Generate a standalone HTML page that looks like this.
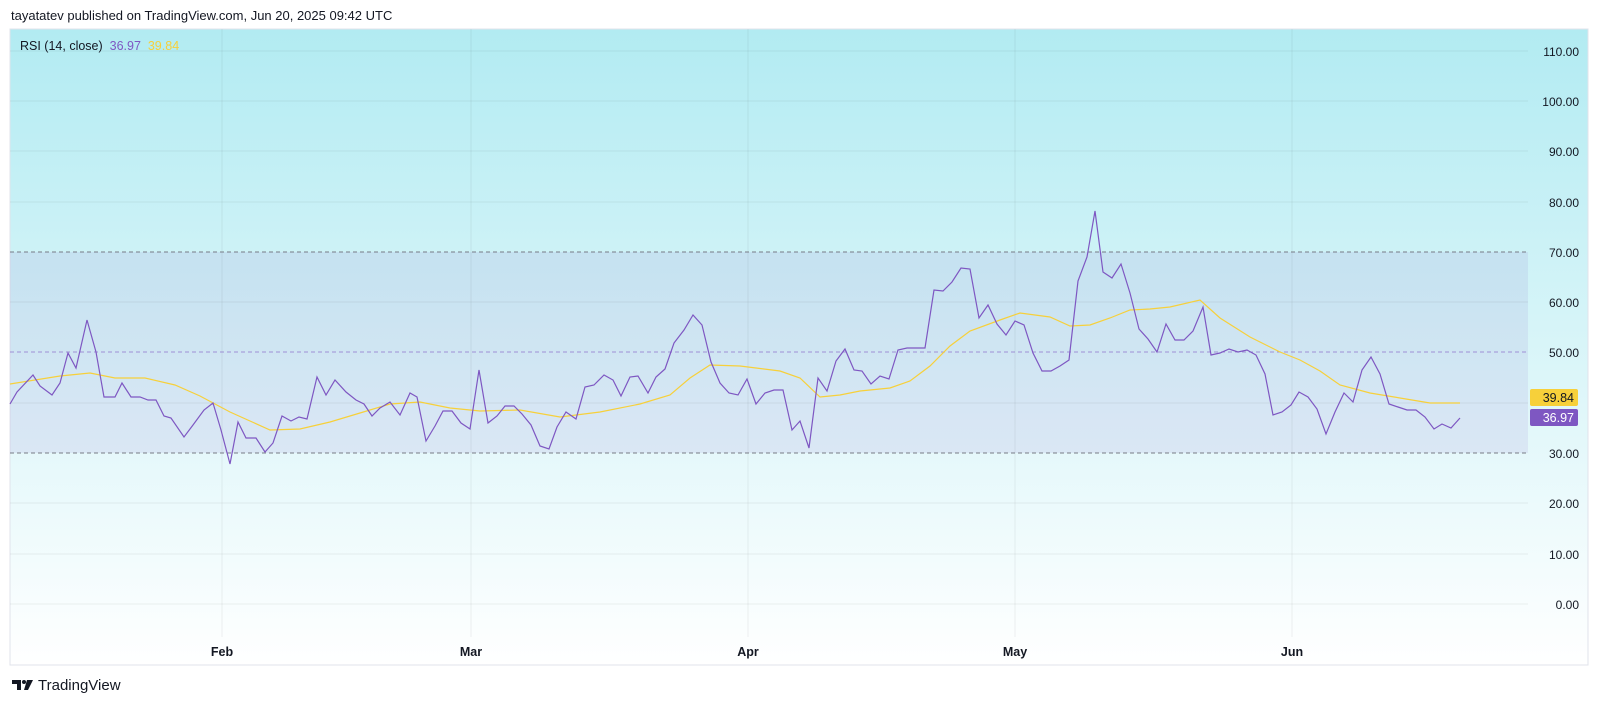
<!DOCTYPE html>
<html><head><meta charset="utf-8"><style>
html,body{margin:0;padding:0;background:#fff;width:1600px;height:718px;overflow:hidden;font-family:"Liberation Sans","DejaVu Sans",sans-serif}
.hdr{position:absolute;left:11px;top:8px;font-size:13px;color:#131722}
.leg{position:absolute;left:20px;top:39px;font-size:12.5px;color:#131722}
.ft{position:absolute;left:38px;top:677px;font-size:15px;color:#131722}
.lab{font-size:12px;fill:#131722;font-family:"Liberation Sans",sans-serif}
</style></head><body>
<svg width="1600" height="718" style="position:absolute;left:0;top:0">
<defs><linearGradient id="g" x1="0" y1="0" x2="0" y2="1">
<stop offset="0" stop-color="#b2ebf2"/><stop offset="1" stop-color="#ffffff"/></linearGradient></defs>
<rect x="10" y="29" width="1578" height="636" fill="url(#g)" stroke="#e0e3eb"/>
<rect x="10" y="252" width="1518" height="201" fill="#7e57c2" fill-opacity="0.1"/>
<g stroke="#000" stroke-opacity="0.06">
<line x1="10" y1="51" x2="1528" y2="51"/><line x1="10" y1="101" x2="1528" y2="101"/><line x1="10" y1="151" x2="1528" y2="151"/><line x1="10" y1="202" x2="1528" y2="202"/><line x1="10" y1="302" x2="1528" y2="302"/><line x1="10" y1="403" x2="1528" y2="403"/><line x1="10" y1="503" x2="1528" y2="503"/><line x1="10" y1="554" x2="1528" y2="554"/><line x1="10" y1="604" x2="1528" y2="604"/>
<line x1="222" y1="29" x2="222" y2="637"/><line x1="471" y1="29" x2="471" y2="637"/><line x1="748" y1="29" x2="748" y2="637"/><line x1="1015" y1="29" x2="1015" y2="637"/><line x1="1292" y1="29" x2="1292" y2="637"/>
</g>
<g stroke="#787b86" stroke-dasharray="4 3" stroke-width="1">
<line x1="10" y1="252" x2="1528" y2="252"/><line x1="10" y1="453" x2="1528" y2="453"/></g>
<line x1="10" y1="352" x2="1528" y2="352" stroke="#7e57c2" stroke-opacity="0.6" stroke-dasharray="4 3"/>
<polyline fill="none" stroke="#f7d03a" stroke-width="1.2" points="10,384 60,376 90,373 115,378 145,378 175,385 200,396 230,412 270,430 300,429 330,422 360,413 390,404 420,402 450,408 480,411 520,410 560,417 600,412 640,404 670,395 690,378 710,365 740,366 780,371 800,378 820,397 840,395 860,391 890,388 910,381 930,366 950,346 970,331 1000,320 1020,313 1050,317 1070,326 1090,325 1110,318 1130,310 1150,309 1170,307 1200,300 1220,318 1250,337 1280,352 1300,360 1320,371 1340,385 1370,393 1400,398 1430,403 1460,403"/>
<polyline fill="none" stroke="#7e57c2" stroke-width="1.2" points="10,404 17,392 33,375 40,386 52,395 60,383 68,353 76,368 87,320 96,352 104,397 115,397 122,383 131,397 140,397 148,400 156,400 164,416 171,418 184,437 193,425 204,410 213,403 221,430 230,464 238,422 246,438 256,438 265,452 273,443 282,416 291,421 299,417 307,419 317,377 326,395 335,380 346,392 356,400 364,404 372,416 380,408 390,402 400,415 410,393 417,397 426,441 435,426 443,411 452,411 461,423 470,429 479,370 488,423 497,416 505,406 514,406 522,414 531,425 540,446 549,449 557,427 566,412 576,419 585,387 594,385 604,375 613,380 621,396 630,377 638,376 648,393 656,377 665,369 674,343 684,330 693,315 702,325 711,362 720,383 729,393 738,395 747,379 756,404 765,393 774,390 783,390 792,430 800,421 809,448 818,378 827,391 836,361 845,349 854,370 862,371 871,384 880,376 889,379 898,350 907,348 916,348 925,348 934,290 943,291 952,282 961,268 970,269 979,318 988,305 997,324 1006,335 1015,321 1024,325 1033,353 1042,371 1051,371 1060,366 1069,360 1078,281 1087,257 1095,211 1103,272 1112,278 1121,264 1130,293 1139,329 1148,339 1157,352 1166,324 1175,340 1184,340 1193,331 1203,307 1211,355 1220,353 1229,349 1238,352 1247,350 1256,355 1265,374 1273,415 1282,412 1291,405 1299,392 1308,397 1317,409 1326,434 1335,412 1344,393 1353,402 1362,370 1371,357 1380,374 1389,404 1398,407 1407,410 1416,410 1425,417 1434,429 1442,424 1451,428 1460,418"/>
<g class="lab" text-anchor="end">
<text x="1579" y="56" class="lab">110.00</text><text x="1579" y="106" class="lab">100.00</text><text x="1579" y="156" class="lab">90.00</text><text x="1579" y="207" class="lab">80.00</text><text x="1579" y="257" class="lab">70.00</text><text x="1579" y="307" class="lab">60.00</text><text x="1579" y="357" class="lab">50.00</text><text x="1579" y="458" class="lab">30.00</text><text x="1579" y="508" class="lab">20.00</text><text x="1579" y="559" class="lab">10.00</text><text x="1579" y="609" class="lab">0.00</text>
</g>
<rect x="1530" y="389" width="48" height="17" rx="2" fill="#f7d03a"/>
<text x="1574" y="402" text-anchor="end" font-size="12.5" fill="#131722">39.84</text>
<rect x="1530" y="409" width="48" height="17" rx="2" fill="#7e57c2"/>
<text x="1574" y="422" text-anchor="end" font-size="12.5" fill="#fff">36.97</text>
<g font-size="12.5" font-weight="bold" fill="#131722" text-anchor="middle">
<text x="222" y="656">Feb</text><text x="471" y="656">Mar</text><text x="748" y="656">Apr</text><text x="1015" y="656">May</text><text x="1292" y="656">Jun</text></g>
<g fill="#131722"><path d="M12 680h9v10h-4v-6h-5z"/><circle cx="24" cy="682" r="2"/><path d="M27 680h6l-5 10h-4z"/></g>
</svg>
<div class="hdr">tayatatev published on TradingView.com, Jun 20, 2025 09:42 UTC</div>
<div class="leg">RSI (14, close) &nbsp;<span style="color:#7e57c2">36.97</span> &nbsp;<span style="color:#f7d03a">39.84</span></div>
<div class="ft">TradingView</div>
</body></html>
